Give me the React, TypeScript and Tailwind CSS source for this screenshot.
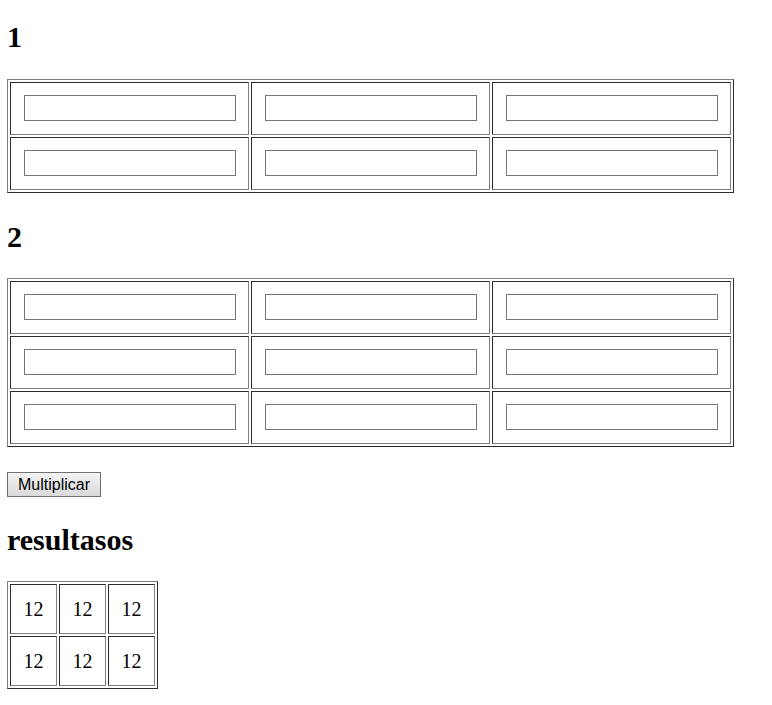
const rowsA = [0, 1];
const rowsB = [0, 1, 2];
const cols = [0, 1, 2];

function InputGrid({ rows }: { rows: number[] }) {
  return (
    <table className="border-separate border-spacing-[2px] border border-t-[#808080] border-l-[#808080] border-r-[#2c2c2c] border-b-[#2c2c2c]">
      <tbody>
        {rows.map((r) => (
          <tr key={r}>
            {cols.map((c) => (
              <td
                key={c}
                className="border border-t-[#2c2c2c] border-l-[#2c2c2c] border-r-[#808080] border-b-[#808080] pl-[13px] pr-[12px] pt-[12px] pb-[13px]"
              >
                <input
                  type="text"
                  className="block h-[26px] w-[212px] border border-[#767676] bg-white px-[2px] text-[16px] outline-none"
                />
              </td>
            ))}
          </tr>
        ))}
      </tbody>
    </table>
  );
}

export default function App() {
  return (
    <div className="min-h-[705px] bg-white px-[7px] pt-[20px] pb-[17px] font-['Liberation_Serif',serif] text-black">
      {/* matriz 1 */}
      <h2 className="text-[30px] leading-[34px] font-bold">1</h2>
      <div className="mt-[25px]">
        <InputGrid rows={rowsA} />
      </div>

      {/* matriz 2 */}
      <h2 className="mt-[27px] text-[30px] leading-[34px] font-bold">2</h2>
      <div className="mt-[24px]">
        <InputGrid rows={rowsB} />
      </div>

      <button className="mt-[25px] block h-[25px] w-[94px] border border-[#707070] bg-gradient-to-b from-[#f3f3f3] to-[#dadada] text-center font-['Liberation_Sans',Arial,sans-serif] text-[16px] leading-[18px] text-black">
        Multiplicar
      </button>

      {/* resultado */}
      <h2 className="mt-[26px] text-[30px] leading-[34px] font-bold">resultasos</h2>

      <table className="mt-[24px] border-separate border-spacing-[2px] border border-t-[#808080] border-l-[#808080] border-r-[#2c2c2c] border-b-[#2c2c2c]">
        <tbody>
          {rowsA.map((r) => (
            <tr key={r}>
              {cols.map((c) => (
                <td
                  key={c}
                  className="h-[50px] w-[47px] border border-t-[#2c2c2c] border-l-[#2c2c2c] border-r-[#808080] border-b-[#808080] p-0 text-center align-middle text-[20px]"
                >
                  12
                </td>
              ))}
            </tr>
          ))}
        </tbody>
      </table>
    </div>
  );
}
